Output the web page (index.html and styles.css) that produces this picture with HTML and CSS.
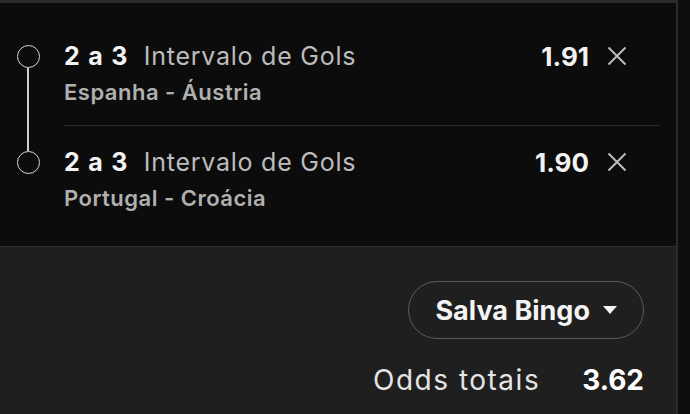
FILE: index.html
```html
<!DOCTYPE html>
<html lang="pt-BR">
<head>
<meta charset="utf-8">
<title>Boletim</title>
<link rel="stylesheet" href="styles.css">
</head>
<body>
<div class="sheet">
  <section class="legs">
    <div class="leg">
      <div class="marker"><span class="dot"></span></div>
      <div class="leg-body">
        <div class="leg-head">
          <p class="pick"><strong>2 a 3</strong><span class="market">Intervalo de Gols</span></p>
          <span class="odd">1.91</span>
          <button class="remove" aria-label="Remover">
            <svg viewBox="0 0 20 20" width="20" height="20"><path d="M1.5 1.5 L18.5 18.5 M18.5 1.5 L1.5 18.5"/></svg>
          </button>
        </div>
        <p class="event">Espanha - Áustria</p>
      </div>
    </div>
    <div class="leg">
      <div class="marker"><span class="dot"></span></div>
      <div class="leg-body">
        <div class="leg-head">
          <p class="pick"><strong>2 a 3</strong><span class="market">Intervalo de Gols</span></p>
          <span class="odd">1.90</span>
          <button class="remove" aria-label="Remover">
            <svg viewBox="0 0 20 20" width="20" height="20"><path d="M1.5 1.5 L18.5 18.5 M18.5 1.5 L1.5 18.5"/></svg>
          </button>
        </div>
        <p class="event">Portugal - Croácia</p>
      </div>
    </div>
  </section>
  <section class="summary">
    <button class="boost">Salva Bingo<span class="caret"></span></button>
    <div class="total">
      <span class="total-label">Odds totais</span>
      <span class="total-value">3.62</span>
    </div>
  </section>
</div>
</body>
</html>
```

FILE: styles.css
```css
* {
  box-sizing: border-box;
}

html, body {
  margin: 0;
  padding: 0;
}

body {
  width: 690px;
  height: 414px;
  overflow: hidden;
  background: #0e0e0e;
  font-family: Inter, "Noto Sans", sans-serif;
  color: #f2f2f2;
}

.sheet {
  width: 678px;
  height: 414px;
  display: flex;
  flex-direction: column;
  border-right: 2px solid #2a2a2a;
}

/* ---- selections list ---- */
.legs {
  background: #0c0c0c;
  border-top: 3px solid #2a2a2a;
  border-bottom: 1px solid #2e2e2e;
  padding-top: 17px;
  height: 247px;
}

.leg {
  display: flex;
}

/* timeline: circle per leg, joined by a thin line */
.marker {
  width: 56px;
  flex: none;
  display: flex;
  flex-direction: column;
  align-items: center;
}

.marker::before,
.marker::after {
  content: "";
  width: 1.5px;
  background: #cfcfcf;
}

.marker::before {
  height: 25px;
}

.marker::after {
  flex: 1;
}

.leg:first-child .marker::before,
.leg:last-child .marker::after {
  visibility: hidden;
}

.dot {
  width: 23px;
  height: 23px;
  flex: none;
  border: 1.5px solid #d6d6d6;
  border-radius: 50%;
}

.leg-body {
  flex: 1;
  margin: 0 16px 0 8px;
  padding: 21px 0 20px;
}

.leg:first-child .leg-body {
  border-bottom: 1.5px solid #2a2a2a;
}

.leg-head {
  display: flex;
  align-items: center;
  height: 30px;
}

.pick {
  flex: 1;
  margin: 0;
  font-size: 25px;
  line-height: 30px;
  white-space: nowrap;
}

.pick strong {
  font-weight: 700;
  color: #f4f4f4;
  letter-spacing: 1.3px;
}

.market {
  margin-left: 15px;
  font-weight: 400;
  color: #bcbcbc;
  letter-spacing: 0.75px;
}

.odd {
  font-size: 26px;
  font-weight: 700;
  color: #f2f2f2;
}

.remove {
  margin: 0 33px 0 18px;
  padding: 0;
  width: 20px;
  height: 20px;
  border: 0;
  background: none;
  display: flex;
}

.remove svg {
  stroke: #bdbdbd;
  stroke-width: 2;
  fill: none;
}

.event {
  margin: 8px 0 0;
  font-size: 22px;
  line-height: 26px;
  font-weight: 600;
  color: #b0b0b0;
  letter-spacing: 0.5px;
}

/* ---- totals ---- */
.summary {
  flex: 1;
  background: #1f1f1f;
  display: flex;
  flex-direction: column;
  align-items: flex-end;
  padding: 34px 32px 0 0;
}

.boost {
  height: 58px;
  padding: 0 26px;
  border: 1.5px solid #5a5a5a;
  border-radius: 29px;
  background: transparent;
  color: #f4f4f4;
  font-family: inherit;
  font-size: 27px;
  font-weight: 700;
  display: flex;
  align-items: center;
  gap: 13px;
}

.caret {
  width: 0;
  height: 0;
  border-left: 7.5px solid transparent;
  border-right: 7.5px solid transparent;
  border-top: 8px solid #f4f4f4;
}

.total {
  margin-top: 23px;
  display: flex;
  align-items: baseline;
  gap: 42px;
  font-size: 28px;
  line-height: 36px;
}

.total-label {
  color: #e4e4e4;
  font-weight: 400;
  letter-spacing: 1.5px;
}

.total-value {
  color: #ffffff;
  font-weight: 700;
}
```
